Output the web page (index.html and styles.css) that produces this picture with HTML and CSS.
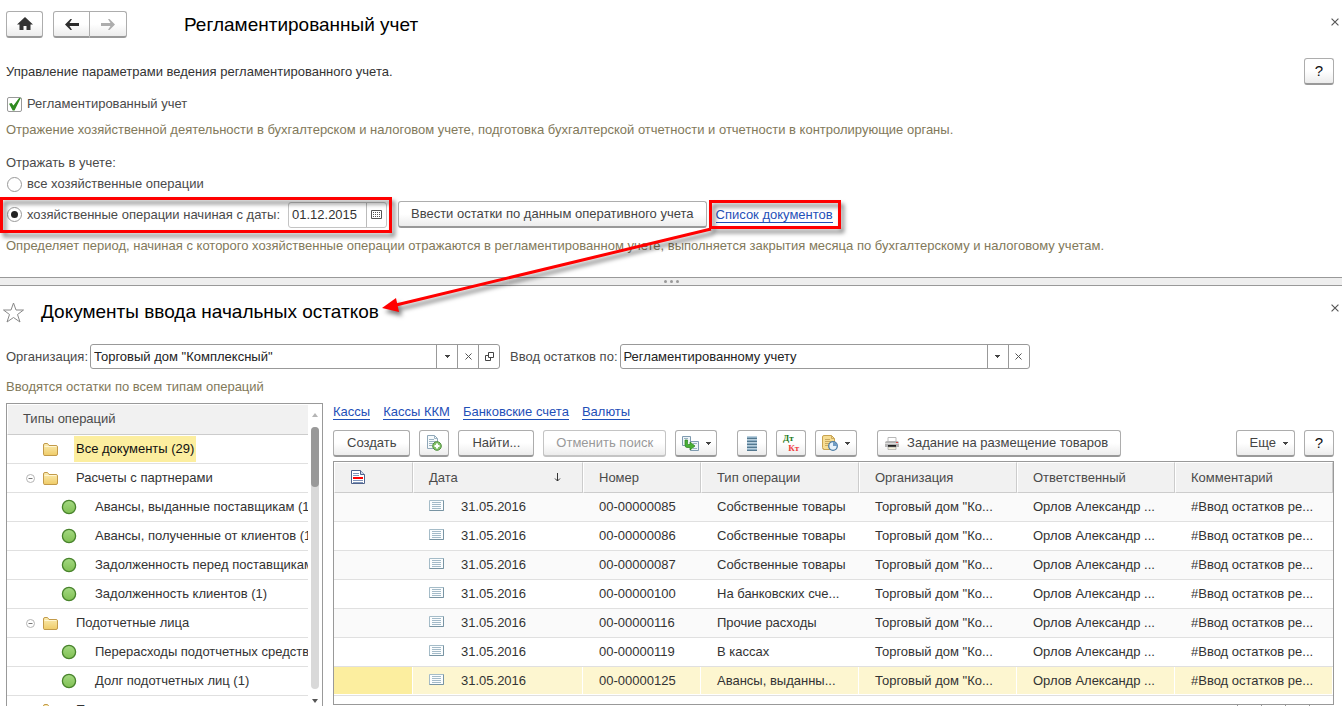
FILE: index.html
```html
<!DOCTYPE html>
<html lang="ru">
<head>
<meta charset="utf-8">
<title>Регламентированный учет</title>
<link rel="stylesheet" href="styles.css">
</head>
<body>
<svg class="defs" width="0" height="0" aria-hidden="true">
  <defs>
    <linearGradient id="gold" x1="0" y1="0" x2="0" y2="1"><stop offset="0" stop-color="#fbedb4"/><stop offset="1" stop-color="#efcb67"/></linearGradient>
    <linearGradient id="leaf" x1="0" y1="0" x2="0" y2="1"><stop offset="0" stop-color="#a4d982"/><stop offset="1" stop-color="#80c053"/></linearGradient>
    <symbol id="folder" viewBox="0 0 15 13"><path d="M.5 11.500V2Q.5.500 2 .5H4.500L6 2.500H13Q14.500 2.500 14.500 4V11Q14.500 12.500 13 12.500H2Q.5 12.500.5 11.500Z" fill="url(#gold)" stroke="#c29a4a"/><path d="M1.500 3.500H13.500" stroke="#fff6d2"/></symbol>
    <symbol id="dot" viewBox="0 0 16 16"><circle cx="8" cy="8" r="6.600" fill="url(#leaf)" stroke="#48832c" stroke-width="1.300"/></symbol>
    <symbol id="minus" viewBox="0 0 9 9"><circle cx="4.500" cy="4.500" r="4" fill="#fff" stroke="#b4b4b4"/><path d="M2.500 4.500H6.500" stroke="#777"/></symbol>
    <symbol id="entry" viewBox="0 0 15 11"><path d="M.5.500H14.500V10.500H.5Z" fill="#fbfdfe" stroke="#a5bcc8"/><path d="M14.500.500V10.500H.5" fill="none" stroke="#7894a3"/><path d="M3 2.500H12M3 4.500H12M3 6.500H12M3 8.500H12" stroke="#a3bac8"/></symbol>
    <symbol id="caret" viewBox="0 0 5 3"><path d="M0 0H5V1H4V2H3V3H2V2H1V1H0Z" fill="#444"/></symbol>
    <symbol id="cross" viewBox="0 0 7 7"><path d="M.5.500L6.500 6.500M6.500.500L.5 6.500" stroke="#555" fill="none"/></symbol>
  </defs>
</svg>

<main class="app">
  <section class="pane settings">
    <header class="bar">
      <button class="btn home" aria-label="Домой"><svg width="16" height="14" viewBox="0 0 16 14"><path d="M8 0L16 7.500H13.500V13H9.500V9H6.500V13H2.500V7.500H0Z" fill="#333"/></svg></button>
      <div class="history">
        <button class="btn" aria-label="Назад"><svg width="14" height="11" viewBox="0 0 14 11"><path d="M0 5.500L5.500 0H7L4.500 4H14V7H4.500L7 11H5.500Z" fill="#2d2d2d"/></svg></button>
        <button class="btn" aria-label="Вперед" disabled><svg width="14" height="11" viewBox="0 0 14 11"><path d="M14 5.500L8.500 0H7L9.500 4H0V7H9.500L7 11H8.500Z" fill="#adadad"/></svg></button>
      </div>
      <h1 class="title">Регламентированный учет</h1>
      <button class="close" aria-label="Закрыть"><svg width="8" height="8" viewBox="0 0 7 7"><use href="#cross"/></svg></button>
    </header>
    <div class="intro">
      <p>Управление параметрами ведения регламентированного учета.</p>
      <button class="btn help">?</button>
    </div>
    <label class="option first"><input type="checkbox" class="check" checked>Регламентированный учет</label>
    <p class="hint">Отражение хозяйственной деятельности в бухгалтерском и налоговом учете, подготовка бухгалтерской отчетности и отчетности в контролирующие органы.</p>
    <p class="caption">Отражать в учете:</p>
    <label class="option"><input type="radio" name="scope" class="radio">все хозяйственные операции</label>
    <div class="from">
      <div class="period marked">
        <label class="option"><input type="radio" name="scope" class="radio" checked>хозяйственные операции начиная с даты:</label>
        <div class="date">
          <input type="text" value="01.12.2015" aria-label="Дата начала">
          <button aria-label="Календарь"><svg width="11" height="9" viewBox="0 0 11 9"><path d="M.5.500H10.500V8.500H.5Z" fill="none" stroke="#555"/><path d="M2 2.500H9M2 4.500H9M2 6.500H9" stroke="#555" stroke-dasharray="1 1"/></svg></button>
        </div>
      </div>
      <button class="btn enter">Ввести остатки по данным оперативного учета</button>
      <span class="target marked"><a class="link" href="#documents">Список документов</a>
        <svg class="arrow" width="350" height="120" viewBox="0 0 350 120" aria-hidden="true"><path d="M341 19L26 95" stroke="#f00" stroke-width="3"/><path d="M12 98L26 88L29 102Z" fill="#f00"/></svg>
      </span>
    </div>
    <p class="hint">Определяет период, начиная с которого хозяйственные операции отражаются в регламентированном учете, выполняется закрытия месяца по бухгалтерскому и налоговому учетам.</p>
  </section>

  <div class="splitter"><i></i><i></i><i></i></div>

  <section class="pane documents" id="documents">
    <header class="bar second">
      <svg width="23" height="21" viewBox="0 0 23 21"><path d="M11.500 1L14 8H21.500L15.500 12.500L18 20L11.500 15.500L5 20L7.500 12.500L1.500 8H9Z" fill="#fff" stroke="#888"/></svg>
      <h2 class="title">Документы ввода начальных остатков</h2>
      <button class="close" aria-label="Закрыть"><svg width="8" height="8" viewBox="0 0 7 7"><use href="#cross"/></svg></button>
    </header>
    <div class="filters">
      <label for="org">Организация:</label>
      <div class="combo">
        <select id="org"><option>Торговый дом "Комплексный"</option></select>
        <span class="drop"><svg width="5" height="3"><use href="#caret"/></svg></span>
        <button aria-label="Очистить"><svg width="7" height="7"><use href="#cross"/></svg></button>
        <button aria-label="Открыть"><svg width="9" height="9" viewBox="0 0 9 9"><path d="M3.500.500H8.500V5.500H3.500ZM3 3.500H.5V8.500H5.500V6" fill="none" stroke="#444"/></svg></button>
      </div>
      <label for="kind">Ввод остатков по:</label>
      <div class="combo">
        <select id="kind"><option>Регламентированному учету</option></select>
        <span class="drop"><svg width="5" height="3"><use href="#caret"/></svg></span>
        <button aria-label="Очистить"><svg width="7" height="7"><use href="#cross"/></svg></button>
      </div>
    </div>
    <p class="hint">Вводятся остатки по всем типам операций</p>

    <div class="work">
      <aside class="tree">
        <div class="tree-body">
          <div class="tree-head">Типы операций</div>
          <ul>
            <li class="group current"><svg class="folder" width="15" height="13"><use href="#folder"/></svg><span>Все документы (29)</span></li>
            <li class="group"><svg class="toggle" width="9" height="9"><use href="#minus"/></svg><svg class="folder" width="15" height="13"><use href="#folder"/></svg><span>Расчеты с партнерами</span></li>
            <li class="leaf"><svg width="16" height="16"><use href="#dot"/></svg><span>Авансы, выданные поставщикам (1)</span></li>
            <li class="leaf"><svg width="16" height="16"><use href="#dot"/></svg><span>Авансы, полученные от клиентов (1)</span></li>
            <li class="leaf"><svg width="16" height="16"><use href="#dot"/></svg><span>Задолженность перед поставщиками</span></li>
            <li class="leaf"><svg width="16" height="16"><use href="#dot"/></svg><span>Задолженность клиентов (1)</span></li>
            <li class="group"><svg class="toggle" width="9" height="9"><use href="#minus"/></svg><svg class="folder" width="15" height="13"><use href="#folder"/></svg><span>Подотчетные лица</span></li>
            <li class="leaf"><svg width="16" height="16"><use href="#dot"/></svg><span>Перерасходы подотчетных средств</span></li>
            <li class="leaf"><svg width="16" height="16"><use href="#dot"/></svg><span>Долг подотчетных лиц (1)</span></li>
            <li class="group"><svg class="toggle" width="9" height="9"><use href="#minus"/></svg><svg class="folder" width="15" height="13"><use href="#folder"/></svg><span>Прочее</span></li>
          </ul>
        </div>
        <div class="scroll">
          <svg width="6" height="4" viewBox="0 0 6 4"><path d="M0 4L3 0L6 4Z" fill="#b5b5b5"/></svg>
          <div class="track"><div class="thumb"></div></div>
          <svg width="6" height="4" viewBox="0 0 6 4"><path d="M0 0H6L3 4Z" fill="#555"/></svg>
        </div>
      </aside>

      <div class="list">
        <nav class="links"><a class="link" href="#cash">Кассы</a><a class="link" href="#kkm">Кассы ККМ</a><a class="link" href="#bank">Банковские счета</a><a class="link" href="#currency">Валюты</a></nav>
        <div class="tools">
          <button class="btn">Создать</button>
          <button class="btn icon" aria-label="Скопировать"><svg width="16" height="16" viewBox="0 0 16 16"><path d="M1.500.500H8.500L11.500 3.500V13.500H1.500Z" fill="#f6fafc" stroke="#8fa7b8"/><path d="M8.500.500V3.500H11.500M3 4.500H8M3 6.500H10M3 8.500H8M3 10.500H6" fill="none" stroke="#9db4c3"/><circle cx="11" cy="11" r="4.300" fill="#85c36b" stroke="#4e8d3b"/><path d="M11 8.500V13.500M8.500 11H13.500" stroke="#fff" stroke-width="2"/></svg></button>
          <button class="btn">Найти...</button>
          <button class="btn cancel" disabled>Отменить поиск</button>
          <button class="btn menu" aria-label="Создать на основании"><svg width="17" height="15" viewBox="0 0 17 15"><path d="M.5.500H8.500V9.500H.5ZM8.500 5.500H16.500V14.500H8.500Z" fill="#eef4f8" stroke="#7f9bb0"/><path d="M2 2.500H6M11 7.500H15M11 12.500H15" stroke="#9bb2c4"/><path d="M3 4H5.500V7.500Q5.500 8.500 6.500 8.500H8V6L13 10L8 14V11.500H5Q3 11.500 3 9Z" fill="#49b035" stroke="#298020" stroke-width=".7"/></svg><svg width="5" height="3"><use href="#caret"/></svg></button>
          <button class="btn icon gap" aria-label="Движения"><svg width="12" height="15" viewBox="0 0 12 15"><path d="M1 0H11V15H1Z" fill="#8fb0c6"/><path d="M1 .5H11M1 3.500H11M1 6.500H11M1 9.500H11M1 12.500H11" stroke="#b9cfdd"/><path d="M1 2.500H11M1 5.500H11M1 8.500H11M1 11.500H11M1 14.500H11" stroke="#54788f"/></svg></button>
          <button class="btn icon dtkt" aria-label="Дебет и кредит"><b class="dt">Дт</b><b class="kt">Кт</b></button>
          <button class="btn menu" aria-label="Отчеты"><svg width="16" height="16" viewBox="0 0 16 16"><path d="M1.500 13.500Q.5 14.500.5 12.500V2Q.5.500 2 .5H9.500L12.500 3.500V14.500H1.500Z" fill="#f7dd93" stroke="#c8a350"/><path d="M9.500.500V3.500H12.500M3 4.500H8M3 6.500H9M3 8.500H7M3 10.500H6" fill="none" stroke="#caa95e"/><circle cx="11" cy="11" r="4.300" fill="#e8f2fa" stroke="#4b7ba3" stroke-width="1.300"/><path d="M11 11V7A4 4 0 0 1 15 11Z" fill="#6f9cc4"/></svg><svg width="5" height="3"><use href="#caret"/></svg></button>
          <button class="btn gap print"><svg width="14" height="13" viewBox="0 0 14 13"><path d="M3 .5H11V5H3Z" fill="#fff" stroke="#b8b8b8"/><path d="M2 4H12Q14 4 14 6V10H0V6Q0 4 2 4Z" fill="#b4b4b4"/><path d="M0 6.500H14" stroke="#dcdcdc"/><path d="M3 8H11V10H3Z" fill="#222"/><path d="M3 10H11V12.500H3Z" fill="#f4f0dc" stroke="#999" stroke-width=".6"/><path d="M11 5.500H13" stroke="#d44"/></svg>Задание на размещение товаров</button>
          <button class="btn more">Еще<svg width="5" height="3"><use href="#caret"/></svg></button>
          <button class="btn help">?</button>
        </div>
        <div class="grid">
          <table>
            <colgroup><col class="c-flag"><col class="c-date"><col class="c-num"><col><col><col><col></colgroup>
            <thead><tr>
              <th class="flag"><svg width="16" height="15" viewBox="0 0 16 15"><path d="M1.500.500H10.500L14.500 4.500V13.500H1.500Z" fill="#fff" stroke="#4f628b"/><path d="M10.500.500V4.500H14.500" fill="#c8d4ea" stroke="#4f628b"/><path d="M3 3.500H9M3 5.500H9M3 10.500H13M3 12.500H13" stroke="#7f95b9"/><path d="M3 8H13" stroke="#f00" stroke-width="2"/></svg></th>
              <th><span class="sorted">Дата<svg width="7" height="9" viewBox="0 0 7 9"><path d="M3.500 0V8M1 5.500L3.500 8L6 5.500" fill="none" stroke="#333"/></svg></span></th>
              <th>Номер</th><th>Тип операции</th><th>Организация</th><th>Ответственный</th><th>Комментарий</th>
            </tr></thead>
            <tbody>
              <tr><td></td><td><svg width="15" height="11"><use href="#entry"/></svg>31.05.2016</td><td>00-00000085</td><td>Собственные товары</td><td>Торговый дом "Ко...</td><td>Орлов Александр ...</td><td>#Ввод остатков ре...</td></tr>
              <tr><td></td><td><svg width="15" height="11"><use href="#entry"/></svg>31.05.2016</td><td>00-00000086</td><td>Собственные товары</td><td>Торговый дом "Ко...</td><td>Орлов Александр ...</td><td>#Ввод остатков ре...</td></tr>
              <tr><td></td><td><svg width="15" height="11"><use href="#entry"/></svg>31.05.2016</td><td>00-00000087</td><td>Собственные товары</td><td>Торговый дом "Ко...</td><td>Орлов Александр ...</td><td>#Ввод остатков ре...</td></tr>
              <tr><td></td><td><svg width="15" height="11"><use href="#entry"/></svg>31.05.2016</td><td>00-00000100</td><td>На банковских сче...</td><td>Торговый дом "Ко...</td><td>Орлов Александр ...</td><td>#Ввод остатков ре...</td></tr>
              <tr><td></td><td><svg width="15" height="11"><use href="#entry"/></svg>31.05.2016</td><td>00-00000116</td><td>Прочие расходы</td><td>Торговый дом "Ко...</td><td>Орлов Александр ...</td><td>#Ввод остатков ре...</td></tr>
              <tr><td></td><td><svg width="15" height="11"><use href="#entry"/></svg>31.05.2016</td><td>00-00000119</td><td>В кассах</td><td>Торговый дом "Ко...</td><td>Орлов Александр ...</td><td>#Ввод остатков ре...</td></tr>
              <tr class="active"><td></td><td><svg width="15" height="11"><use href="#entry"/></svg>31.05.2016</td><td>00-00000125</td><td>Авансы, выданны...</td><td>Торговый дом "Ко...</td><td>Орлов Александр ...</td><td>#Ввод остатков ре...</td></tr>
            </tbody>
          </table>
        </div>
        <div class="pager"><i></i><i></i><i></i><i></i></div>
      </div>
    </div>
  </section>
</main>
</body>
</html>
```
FILE: styles.css
```css
* { box-sizing: border-box; }
body {
  margin: 0;
  background: #fff;
  color: #333;
  font: 13px/16px "Liberation Sans", Arial, sans-serif;
}
p, h1, h2, ul { margin: 0; padding: 0; }
button, input, select { font: inherit; color: inherit; margin: 0; }
svg { display: block; flex: none; }
.defs { position: absolute; }

.app { display: flex; flex-direction: column; height: 100vh; overflow: hidden; }
.pane { padding: 0 8px 0 6px; }
.documents { display: flex; flex-direction: column; flex: 1; min-height: 0; }

.btn {
  display: inline-flex;
  align-items: center;
  justify-content: center;
  height: 27px;
  padding: 0 13px;
  border: 1px solid #adadad;
  border-bottom: 2px solid #999;
  border-radius: 3px;
  background: linear-gradient(#fff 50%, #ececec);
  color: #444;
  white-space: nowrap;
}
.btn:disabled { color: #999; border-color: #c4c4c4; }
.help { width: 30px; padding: 0; font-size: 15px; color: #111; }
.link { color: #1f50b8; text-decoration: none; border-bottom: 1px solid #1f50b8; line-height: 14px; }
.title { font-size: 19px; line-height: 24px; font-weight: 400; color: #000; white-space: nowrap; }
.close { align-self: flex-start; margin: 7px 3px 0 auto; padding: 0; border: 0; background: none; }
.second .close { margin-top: 4px; }
.hint { color: #82795a; white-space: nowrap; }

.bar { display: flex; align-items: center; margin-right: -8px; }
.settings .bar { padding-top: 11px; }
.settings .title { margin-left: 57px; }
.home { width: 37px; padding: 0; margin-right: 10px; }
.history { display: flex; }
.history .btn { width: 37px; padding: 0; border-radius: 3px 0 0 3px; }
.history .btn + .btn { border-color: #adadad #adadad #999; border-left: 0; border-radius: 0 3px 3px 0; }
.intro { display: flex; align-items: center; justify-content: space-between; margin-top: 20px; }
.option { display: flex; align-items: center; gap: 5px; width: max-content; color: #4a4a4a; white-space: nowrap; }
.option.first { margin: 11px 0 10px; }
.caption { margin: 17px 0 5px; color: #4a4a4a; }

.check, .radio {
  appearance: none;
  display: grid;
  place-items: center;
  width: 15px;
  height: 15px;
  margin: 0 0 0 1px;
  border: 1px solid #999;
  background: #fff;
}
.check { border-radius: 2px; }
.check:checked::before {
  content: "";
  width: 13px;
  height: 13px;
  background: #2f8a1f;
  clip-path: polygon(8% 48%, 28% 43%, 42% 62%, 88% 0, 100% 0, 50% 100%, 36% 100%);
}
.radio { border-radius: 50%; }
.radio:checked::before { content: ""; width: 7px; height: 7px; border-radius: 50%; background: #222; }

.from { display: flex; align-items: center; margin: 9px 0 10px; }
.period { display: flex; align-items: center; gap: 8px; }
.date { display: flex; width: 99px; height: 26px; border: 1px solid #c4c4c4; border-radius: 3px; }
.date input { flex: 1; min-width: 0; padding: 0 3px; border: 0; background: none; }
.date button { display: grid; place-items: center; width: 20px; padding: 0; border: 0; border-left: 1px solid #bbb; background: none; }
.enter { margin: 0 9px 0 11px; padding: 0 12px; }
.marked { position: relative; }
.marked::after {
  content: "";
  position: absolute;
  inset: -5px -5px -5px -6px;
  border: 3px solid #f00;
  filter: drop-shadow(3px 4px 2px rgba(0, 0, 0, .5));
  pointer-events: none;
}
.target::after { inset: -7px -8px -6px -7px; }
.arrow {
  position: absolute;
  top: 3px;
  right: 113px;
  filter: drop-shadow(3px 4px 2px rgba(0, 0, 0, .5));
  pointer-events: none;
}

.splitter {
  display: flex;
  flex: none;
  align-items: center;
  justify-content: center;
  gap: 3px;
  height: 9px;
  margin-top: 23px;
  border: solid #999;
  border-width: 1px 0;
  background: #eee;
}
.splitter i { width: 3px; height: 3px; border-radius: 50%; background: #999; }

.second { margin: 14px -8px 20px -4px; gap: 16px; }
.filters { display: flex; align-items: center; gap: 2px; margin-bottom: 10px; color: #4a4a4a; white-space: nowrap; }
.combo {
  display: flex;
  flex: 0 1 410px;
  height: 25px;
  border: 1px solid #999;
  border-radius: 3px;
  color: #222;
}
.combo + label { margin-left: 8px; }
.combo select { appearance: none; flex: 1; min-width: 0; padding: 0 3px; border: 0; background: none; }
.combo button, .drop { display: grid; place-items: center; width: 21px; padding: 0; border: 0; border-left: 1px solid #999; background: none; }

.work { display: flex; flex: 1; gap: 10px; min-height: 0; margin-top: 8px; }
.tree { display: flex; flex: 0 0 317px; border: 1px solid #999; border-bottom: 0; overflow: hidden; }
.tree-body { flex: 1; min-width: 0; overflow: hidden; }
.tree-head { height: 31px; padding: 6px 15px; border: solid #fff; border-width: 1px 0 0 1px; border-bottom: 1px solid #ccc; background: #f1f1f1; color: #4a4a4a; }
.tree ul { list-style: none; }
.tree li { display: flex; align-items: center; height: 29px; border-bottom: 1px solid #e0e0e0; white-space: nowrap; }
.tree li span { padding: 5px 2px; }
.group { padding-left: 19px; }
.toggle { margin-right: -9px; }
.folder { margin: 0 16px 0 17px; }
.leaf { padding-left: 54px; gap: 16px; }
.current span { background: #fcee9f; color: #111; }
.scroll { display: flex; flex-direction: column; align-items: center; width: 14px; padding: 9px 0 3px; gap: 10px; }
.track { flex: 1; width: 8px; border-radius: 4px; background: #d9d9d9; }
.thumb { height: 60px; border-radius: 4px; background: #999; }

.list { flex: 1; min-width: 0; }
.links { display: flex; gap: 13px; padding: 2px 0 10px; }
.tools { display: flex; gap: 9px; margin-bottom: 4px; }
.cancel { padding: 0 12px; }
.icon { width: 30px; padding: 0; }
.menu { width: 42px; padding: 0; gap: 7px; }
.gap { margin-left: 11px; }
.print { gap: 8px; padding: 0 12px 0 7px; }
.more { margin-left: auto; gap: 7px; padding: 0 6px 0 13px; }
.dtkt { flex-direction: column; font: 700 9px/10px "Liberation Serif", serif; }
.dt { color: #277a1c; align-self: flex-start; margin-left: 6px; }
.kt { color: #f03c3c; align-self: flex-end; margin-right: 6px; }

.grid { height: 244px; border: 1px solid #999; }
table { width: 100%; border-collapse: separate; border-spacing: 0; table-layout: fixed; }
.c-flag { width: 79px; }
.c-date { width: 170px; }
.c-num { width: 118px; }
th, td { padding: 0 0 0 15px; text-align: left; font-weight: 400; white-space: nowrap; overflow: hidden; }
th { height: 31px; border: 1px solid #fff; border-right-color: #ccc; border-bottom-color: #ccc; background: #f1f1f1; color: #4a4a4a; }
.sorted { display: flex; align-items: center; justify-content: space-between; padding-right: 21px; }
td { height: 29px; padding-left: 16px; border-bottom: 1px solid #e0e0e0; }
td svg { display: inline-block; margin-right: 17px; }
tbody tr:nth-child(odd) td { background: #fafafa; }
tbody .active td:nth-child(n) { background: #fdf6d0; box-shadow: inset -1px -1px 0 #fff; }
tbody .active td:first-child { background: #fcee9f; }
.pager { display: flex; justify-content: flex-end; gap: 23px; padding-right: 24px; }
.pager i { width: 1px; height: 20px; background: #999; }
```
